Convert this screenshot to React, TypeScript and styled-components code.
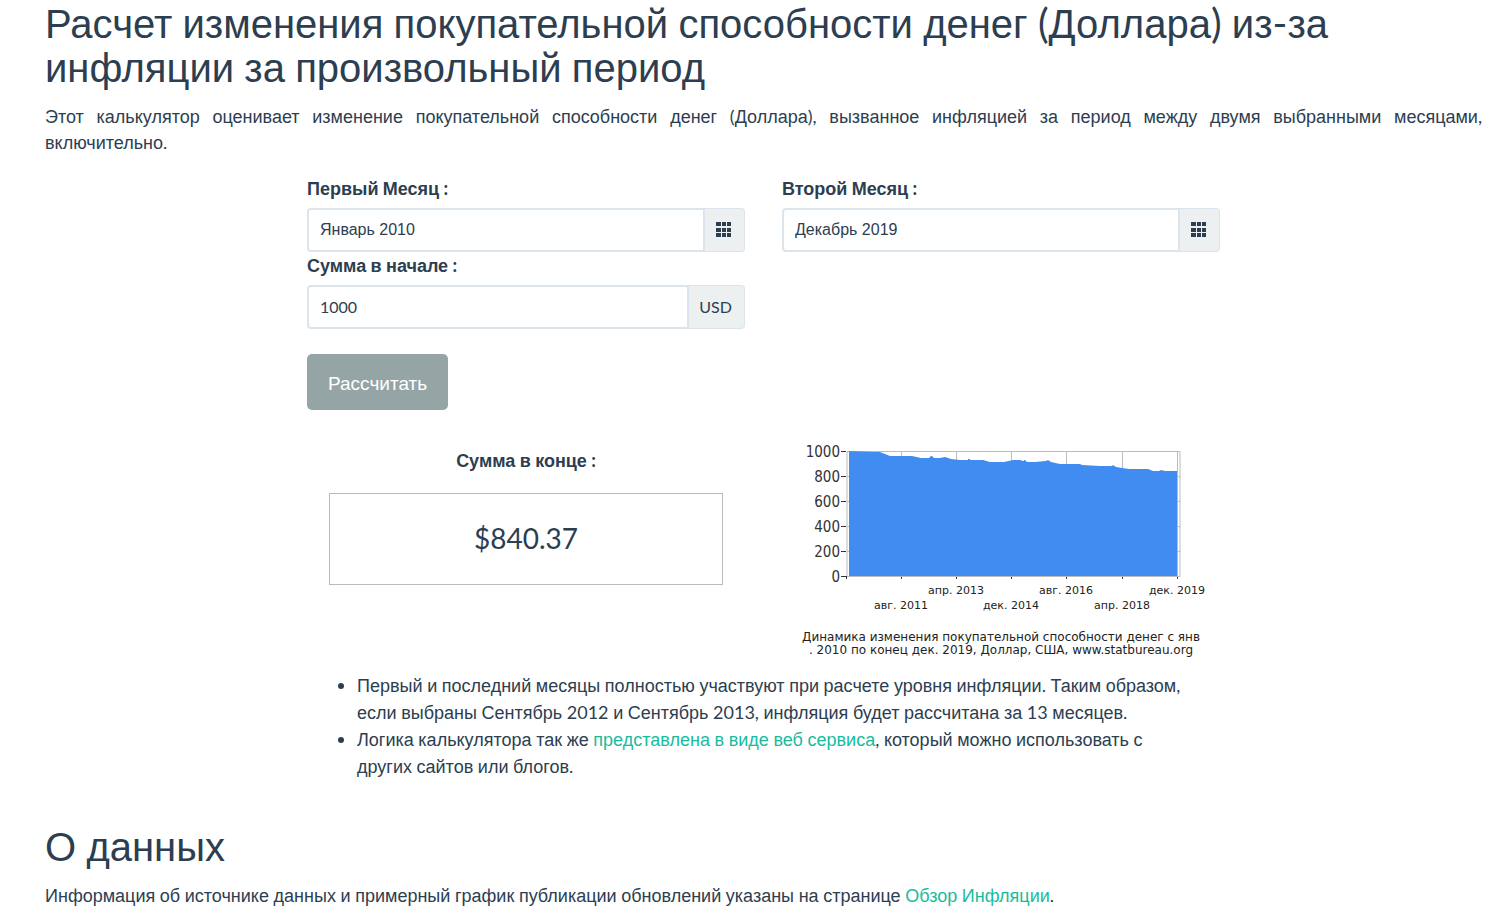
import React from "react";
import styled, { createGlobalStyle } from "styled-components";

const ink = "#2c3e50";
const line = "#dce4ec";

const GlobalStyle = createGlobalStyle`
  * { box-sizing: border-box; }
  body {
    margin: 0;
    background: #fff;
    color: ${ink};
    font-family: Lato, "Liberation Sans", Arial, sans-serif;
    font-size: 18px;
    line-height: 27px;
  }
`;

const Page = styled.main`
  padding: 1px 24px 0 45px;
`;

const Heading = styled.h1`
  margin: 0 0 14px;
  font-size: 40px;
  font-weight: 400;
  line-height: 44px;
`;

const Intro = styled.p`
  margin: 0;
  line-height: 26px;
  text-align: justify;
`;

const Cyrillic = styled.span`
  font-family: "Liberation Sans", Arial, sans-serif;
  line-height: 1;
`;

const Calculator = styled.section`
  max-width: 913px;
  margin: 20px auto 0;
`;

const Columns = styled.div`
  display: grid;
  grid-template-columns: 1fr 1fr;
  column-gap: 37px;
`;

const Field = styled.div`
  display: flex;
  flex-direction: column;
  gap: 6px;
`;

const Label = styled.label`
  font-weight: 700;
`;

const InputGroup = styled.div`
  display: flex;
  height: 44px;
`;

const TextInput = styled.input<{ $cyrillic?: boolean }>`
  flex: 1;
  min-width: 0;
  padding: ${(p) => (p.$cyrillic ? "0 11px" : "0 11px 2px")};
  border: 2px solid ${line};
  border-radius: 4px 0 0 4px;
  background: #fff;
  color: ${ink};
  font-family: ${(p) => (p.$cyrillic ? '"Liberation Sans", Arial, sans-serif' : "inherit")};
  font-size: 16px;
`;

const addon = `
  display: flex;
  align-items: center;
  justify-content: center;
  border: 1px solid ${line};
  border-left: 0;
  border-radius: 0 4px 4px 0;
  background: #ecf0f1;
  color: ${ink};
`;

const PickerButton = styled.button`
  ${addon}
  width: 40px;
  padding: 0 2px 0 0;
`;

const Unit = styled.span`
  ${addon}
  width: 56px;
  padding: 0 2px 2px 0;
  font-size: 16px;
`;

const SubmitButton = styled.button`
  margin-top: 25px;
  height: 56px;
  padding: 0 21px;
  border: 0;
  border-radius: 5px;
  background: #95a5a6;
  color: #fff;
  font-family: inherit;
  font-size: 19px;
`;

const Results = styled(Columns)`
  margin-top: 25px;
`;

const Outcome = styled.div`
  padding: 12px 22px 0;
  text-align: center;
`;

const OutcomeTitle = styled.div`
  font-weight: 700;
`;

const Amount = styled.output`
  display: flex;
  align-items: center;
  justify-content: center;
  height: 92px;
  margin-top: 19px;
  padding-bottom: 2px;
  border: 1px solid #bbb;
  font-size: 28px;
`;

const ChartDrawing = styled.svg`
  display: block;
  width: 100%;
`;

const Notes = styled.ul`
  margin: 10px 0 0;
  padding: 0 20px 0 50px;
`;

const Link = styled.a`
  color: #18bc9c;
  text-decoration: none;
`;

const About = styled.section`
  margin-top: 44px;
`;

/* Cyrillic words are set in Liberation Sans; spaces, digits and punctuation stay in Lato. */
function Words({ children }: { children: string }) {
  return (
    <>
      {children
        .split(/([А-Яа-яЁё]+)/)
        .map((run, i) => (i % 2 ? <Cyrillic key={i}>{run}</Cyrillic> : run))}
    </>
  );
}

function GridIcon() {
  return (
    <svg width="16" height="16" viewBox="0 0 16 16" fill={ink} aria-hidden="true">
      {[0, 6, 11].map((y) =>
        [0, 6, 11].map((x) => <rect key={`${x}-${y}`} x={x} y={y} width={x ? 4 : 5} height={4} />)
      )}
    </svg>
  );
}

function MonthField({ id, label, value }: { id: string; label: string; value: string }) {
  return (
    <Field>
      <Label htmlFor={id}>
        <Words>{label}</Words>
      </Label>
      <InputGroup>
        <TextInput id={id} defaultValue={value} $cyrillic />
        <PickerButton type="button" aria-label="Выбрать месяц">
          <GridIcon />
        </PickerButton>
      </InputGroup>
    </Field>
  );
}

const monthTicks = [
  { x: 119, y: 174, text: "авг. 2011" },
  { x: 174, y: 159, text: "апр. 2013" },
  { x: 229, y: 174, text: "дек. 2014" },
  { x: 284, y: 159, text: "авг. 2016" },
  { x: 340, y: 174, text: "апр. 2018" },
  { x: 395, y: 159, text: "дек. 2019" },
];

const valueTicks = [1000, 800, 600, 400, 200, 0];

const area =
  "M67 16 L90 17 L98 17 L103 19 L108 21 L130 21 L139 23 H147 L149 21 H150 L152 23 H158 L163 22 L169 24 L178 25 H186 V24 H188 V25 H201 L208 27 L222 27 L231 25 H238 L241 26 H242 V25 H243 L245 27 H253 L264 26 L266 25 L269 27 L278 29 H298 L300 30 L318 31 H330 L331 30 L334 32 L347 34 H366 L371 36 H377 L379 35 L383 36 H395 V141 H67 Z";

function PowerChart() {
  return (
    <ChartDrawing viewBox="0 0 438 227" role="img" aria-label="Динамика изменения покупательной способности">
      <g fill="none" stroke="#bbb">
        <path d="M65 16.5 H398 V141.5 H65 Z" />
        {monthTicks.map((t) => (
          <path key={t.x} d={`M${t.x}.5 16 V141`} />
        ))}
        {valueTicks.map((v, i) => (
          <path key={v} d={`M65 ${16 + i * 25}.5 H398`} />
        ))}
      </g>
      <path d={area} fill="#418cf0" />
      <g stroke="#333">
        {valueTicks.map((v, i) => (
          <path key={v} d={`M59 ${16 + i * 25}.5 H64`} />
        ))}
        <path d="M64.5 141 V144" />
        {monthTicks.map((t) => (
          <path key={t.x} d={`M${t.x}.5 142 V144`} />
        ))}
      </g>
      <g fill="#333" fontFamily='"DejaVu Sans Condensed", "DejaVu Sans", sans-serif' fontSize="15" textAnchor="end">
        {valueTicks.map((v, i) => (
          <text key={v} x="58" y={22 + i * 25}>{v}</text>
        ))}
      </g>
      <g fill="#222" fontFamily='"DejaVu Sans", sans-serif' fontSize="11" textAnchor="middle">
        {monthTicks.map((t) => (
          <text key={t.x} x={t.x} y={t.y}>{t.text}</text>
        ))}
      </g>
      <g fill="#222" fontFamily='"DejaVu Sans", sans-serif' fontSize="12" textAnchor="middle">
        <text x="219" y="206">Динамика изменения покупательной способности денег с янв</text>
        <text x="219" y="219">. 2010 по конец дек. 2019, Доллар, США, www.statbureau.org</text>
      </g>
    </ChartDrawing>
  );
}

export default function App() {
  return (
    <Page>
      <GlobalStyle />
      <Heading>
        <Words>
          Расчет изменения покупательной способности денег (Доллара) из-за инфляции за произвольный период
        </Words>
      </Heading>
      <Intro>
        <Words>
          Этот калькулятор оценивает изменение покупательной способности денег (Доллара), вызванное инфляцией за период
          между двумя выбранными месяцами, включительно.
        </Words>
      </Intro>
      <Calculator>
        <form onSubmit={(e) => e.preventDefault()}>
          <Columns>
            <MonthField id="first-month" label="Первый Месяц :" value="Январь 2010" />
            <MonthField id="second-month" label="Второй Месяц :" value="Декабрь 2019" />
            <Field>
              <Label htmlFor="amount">
                <Words>Сумма в начале :</Words>
              </Label>
              <InputGroup>
                <TextInput id="amount" defaultValue="1000" />
                <Unit>USD</Unit>
              </InputGroup>
            </Field>
          </Columns>
          <SubmitButton type="submit">
            <Words>Рассчитать</Words>
          </SubmitButton>
        </form>
        <Results>
          <Outcome>
            <OutcomeTitle>
              <Words>Сумма в конце :</Words>
            </OutcomeTitle>
            <Amount>$840.37</Amount>
          </Outcome>
          <PowerChart />
        </Results>
        <Notes>
          <li>
            <Words>
              Первый и последний месяцы полностью участвуют при расчете уровня инфляции. Таким образом, если выбраны
              Сентябрь 2012 и Сентябрь 2013, инфляция будет рассчитана за 13 месяцев.
            </Words>
          </li>
          <li>
            <Words>Логика калькулятора так же </Words>
            <Link href="#service">
              <Words>представлена в виде веб сервиса</Words>
            </Link>
            <Words>, который можно использовать с других сайтов или блогов.</Words>
          </li>
        </Notes>
      </Calculator>
      <About>
        <Heading as="h2">
          <Words>О данных</Words>
        </Heading>
        <Intro>
          <Words>
            Информация об источнике данных и примерный график публикации обновлений указаны на странице
          </Words>{" "}
          <Link href="#overview">
            <Words>Обзор Инфляции</Words>
          </Link>
          .
        </Intro>
      </About>
    </Page>
  );
}
